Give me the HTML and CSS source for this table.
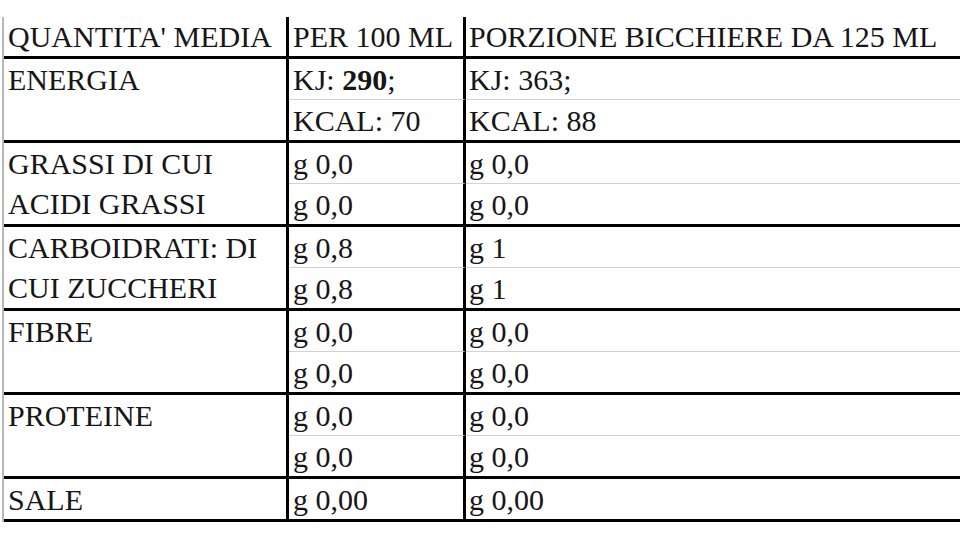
FILE: index.html
```html
<!DOCTYPE html>
<html lang="it">
<head>
<meta charset="utf-8">
<title>Valori nutrizionali</title>
<link rel="stylesheet" href="styles.css">
</head>
<body>
<table class="nutri">
  <colgroup>
    <col class="c1">
    <col class="c2">
    <col class="c3">
  </colgroup>
  <tbody>
    <tr class="head">
      <td class="lab">QUANTITA' MEDIA</td>
      <td class="mid">PER 100 ML</td>
      <td class="last">PORZIONE BICCHIERE DA 125 ML</td>
    </tr>
    <tr class="sub1">
      <td class="lab group" rowspan="2">ENERGIA</td>
      <td class="mid">KJ: <b>290</b>;</td>
      <td class="last">KJ: 363;</td>
    </tr>
    <tr class="sub2">
      <td class="mid">KCAL: 70</td>
      <td class="last">KCAL: 88</td>
    </tr>
    <tr class="sub1">
      <td class="lab group" rowspan="2">GRASSI DI CUI<br>ACIDI GRASSI</td>
      <td class="mid">g 0,0</td>
      <td class="last">g 0,0</td>
    </tr>
    <tr class="sub2">
      <td class="mid">g 0,0</td>
      <td class="last">g 0,0</td>
    </tr>
    <tr class="sub1">
      <td class="lab group" rowspan="2">CARBOIDRATI: DI<br>CUI ZUCCHERI</td>
      <td class="mid">g 0,8</td>
      <td class="last">g 1</td>
    </tr>
    <tr class="sub2">
      <td class="mid">g 0,8</td>
      <td class="last">g 1</td>
    </tr>
    <tr class="sub1">
      <td class="lab group" rowspan="2">FIBRE</td>
      <td class="mid">g 0,0</td>
      <td class="last">g 0,0</td>
    </tr>
    <tr class="sub2">
      <td class="mid">g 0,0</td>
      <td class="last">g 0,0</td>
    </tr>
    <tr class="sub1">
      <td class="lab group" rowspan="2">PROTEINE</td>
      <td class="mid">g 0,0</td>
      <td class="last">g 0,0</td>
    </tr>
    <tr class="sub2">
      <td class="mid">g 0,0</td>
      <td class="last">g 0,0</td>
    </tr>
    <tr class="single">
      <td class="lab">SALE</td>
      <td class="mid">g 0,00</td>
      <td class="last">g 0,00</td>
    </tr>
  </tbody>
</table>
</body>
</html>
```
FILE: styles.css
```css
html, body {
  margin: 0;
  padding: 0;
  background: #ffffff;
  overflow: hidden;
}

body {
  width: 960px;
  height: 540px;
  font-family: "Liberation Serif", Tinos, "Times New Roman", Times, serif;
  font-size: 30px;
  color: #161616;
}

.nutri {
  margin: 17px 0 0 2px;
  border-collapse: separate;
  border-spacing: 0;
  table-layout: fixed;
  width: 958px;
  border-left: 2px solid #b8b8b8;
  font-family: "Liberation Serif", Tinos, "Times New Roman", Times, serif;
}

.c1 { width: 285px; }
.c2 { width: 177px; }
.c3 { width: 494px; }

.nutri td {
  box-sizing: border-box;
  vertical-align: top;
  padding: 2px 0 0 4px;
  line-height: 38px;
  white-space: nowrap;
  overflow: hidden;
  font-family: "Liberation Serif", Tinos, "Times New Roman", Times, serif;
  font-size: 30px;
}

.nutri td.lab,
.nutri td.mid {
  border-right: 3px solid #000;
}

.nutri td.last {
  padding-left: 3px;
}

.head td {
  padding-top: 1px;
  border-bottom: 3px solid #000;
}

.sub1 td {
  border-bottom: 1px solid #d2d2d2;
}

.sub2 td,
.single td {
  border-bottom: 3px solid #000;
}

.nutri td.group {
  padding-top: 1px;
  line-height: 40px;
  border-bottom: 3px solid #000;
}

.nutri b {
  font-weight: bold;
}
```
